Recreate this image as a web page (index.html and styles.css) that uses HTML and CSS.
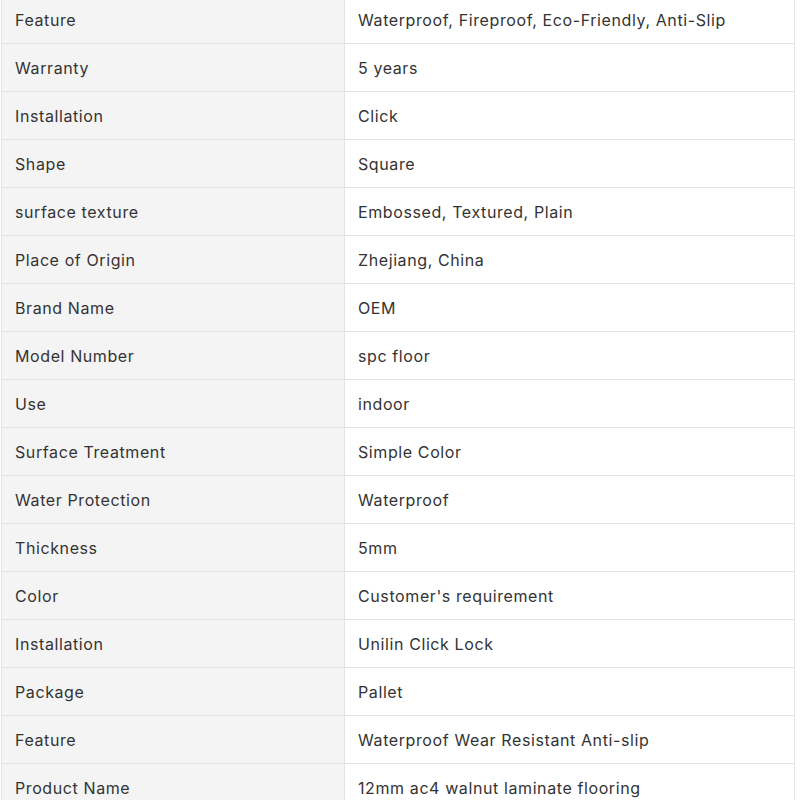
FILE: index.html
```html
<!DOCTYPE html>
<html>
<head>
<meta charset="utf-8">
<link rel="stylesheet" href="styles.css">
</head>
<body>
<table class="spec">
<tbody>
<tr><td class="k">Feature</td><td class="v">Waterproof, Fireproof, Eco-Friendly, Anti-Slip</td></tr>
<tr><td class="k">Warranty</td><td class="v">5 years</td></tr>
<tr><td class="k">Installation</td><td class="v">Click</td></tr>
<tr><td class="k">Shape</td><td class="v">Square</td></tr>
<tr><td class="k">surface texture</td><td class="v">Embossed, Textured, Plain</td></tr>
<tr><td class="k">Place of Origin</td><td class="v">Zhejiang, China</td></tr>
<tr><td class="k">Brand Name</td><td class="v">OEM</td></tr>
<tr><td class="k">Model Number</td><td class="v">spc floor</td></tr>
<tr><td class="k">Use</td><td class="v">indoor</td></tr>
<tr><td class="k">Surface Treatment</td><td class="v">Simple Color</td></tr>
<tr><td class="k">Water Protection</td><td class="v">Waterproof</td></tr>
<tr><td class="k">Thickness</td><td class="v">5mm</td></tr>
<tr><td class="k">Color</td><td class="v">Customer's requirement</td></tr>
<tr><td class="k">Installation</td><td class="v">Unilin Click Lock</td></tr>
<tr><td class="k">Package</td><td class="v">Pallet</td></tr>
<tr><td class="k">Feature</td><td class="v">Waterproof Wear Resistant Anti-slip</td></tr>
<tr><td class="k">Product Name</td><td class="v">12mm ac4 walnut laminate flooring</td></tr>
</tbody>
</table>
</body>
</html>
```

FILE: styles.css
```css
html, body {
  margin: 0;
  padding: 0;
  background: #ffffff;
}
body {
  font-family: Inter, "Noto Sans", sans-serif;
  font-size: 16px;
  letter-spacing: 0.6px;
  color: #333333;
  overflow: hidden;
  height: 800px;
}
.spec {
  border-collapse: collapse;
  margin: -5px 0 0 1px;
  width: 794px;
  table-layout: fixed;
}
.spec td {
  border: 1px solid #e3e3e3;
  height: 48px;
  padding: 0 13px;
  vertical-align: middle;
  line-height: 20px;
  box-sizing: border-box;
}
.spec td.k {
  width: 343px;
  background: #f4f4f4;
}
.spec td.v {
  background: #ffffff;
}
```
